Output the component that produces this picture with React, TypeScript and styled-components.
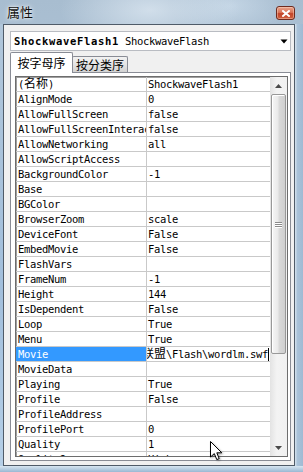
import React from "react";
import styled, { createGlobalStyle } from "styled-components";

const Global = createGlobalStyle`
  html, body { margin: 0; padding: 0; overflow: hidden; background: #b4cadd; }
  * { box-sizing: border-box; }
`;

const MONO = `"DejaVu Sans Mono", "Liberation Mono", monospace`;
const CJK = `"Noto Sans CJK SC", "Noto Sans", sans-serif`;

const Window = styled.div`
  position: relative;
  width: 303px;
  height: 472px;
  display: flex;
  flex-direction: column;
  overflow: hidden;
  background:
    radial-gradient(ellipse 90px 40px at 150px 10px, rgba(226, 236, 245, 0.7), rgba(226, 236, 245, 0) 100%),
    radial-gradient(ellipse 60px 30px at 230px 6px, rgba(210, 226, 240, 0.65), rgba(210, 226, 240, 0) 100%),
    linear-gradient(180deg, #a8bdd0 0%, #b3c9dc 40%, #a6c1da 100%);
`;

const TitleBar = styled.div`
  height: 24px;
  flex: none;
  display: flex;
  align-items: center;
  justify-content: space-between;
  padding: 0 8px 0 7px;
`;

const Title = styled.span`
  font-family: ${CJK};
  font-size: 13px;
  line-height: 16px;
  color: #111;
  text-shadow: 0 0 5px rgba(255, 255, 255, 0.95), 0 0 2px rgba(255, 255, 255, 0.9);
`;

const CloseButton = styled.div`
  width: 19px;
  height: 14px;
  margin-top: 2px;
  border: 1px solid #6e2b1f;
  border-radius: 3px;
  background: linear-gradient(180deg, #e9a48c 0%, #d97458 45%, #c2452a 55%, #d0603e 100%);
  box-shadow: inset 0 0 0 1px rgba(255, 220, 200, 0.45);
  display: flex;
  align-items: center;
  justify-content: center;
`;

const Main = styled.div`
  flex: 1;
  display: flex;
  min-height: 0;
`;

const SideFrame = styled.div<{ $w: number }>`
  width: ${(p) => p.$w}px;
  flex: none;
  background: linear-gradient(180deg, #b0c6da 0%, #a2bfdc 60%, #b5cfe7 100%);
`;

const RightFrame = styled(SideFrame)`
  background: linear-gradient(90deg, #d6e3ee 0%, #a9c2d9 30%, #9fbad3 100%);
`;

const BottomFrame = styled.div`
  height: 6px;
  flex: none;
  background: linear-gradient(180deg, #d8e6f1 0%, #b2cadf 60%, #9ab8d3 100%);
`;

const Client = styled.div`
  flex: 1;
  display: flex;
  flex-direction: column;
  min-width: 0;
  border: 1px solid #4f5b68;
  background: #f0f0f0;
  padding: 6px 3px 4px 6px;
`;

const ComboBox = styled.div`
  height: 20px;
  flex: none;
  display: flex;
  align-items: center;
  justify-content: space-between;
  border: 1px solid #b9bcc2;
  background: #ffffff;
  padding: 0 2px 0 3px;
  margin-bottom: 1px;
`;

const ComboText = styled.span`
  font-family: ${MONO};
  font-size: 10.5px;
  letter-spacing: -0.32px;
  color: #000;
  white-space: nowrap;
  line-height: 14px;
`;

const ComboBold = styled.b`
  font-weight: bold;
  letter-spacing: 0.68px;
`;

const TabStrip = styled.div`
  height: 20px;
  flex: none;
  display: flex;
  align-items: flex-end;
`;

const Tab = styled.div<{ $active?: boolean }>`
  position: relative;
  z-index: ${(p) => (p.$active ? 2 : 1)};
  width: ${(p) => (p.$active ? 63 : 56)}px;
  height: ${(p) => (p.$active ? 21 : 16)}px;
  margin-bottom: ${(p) => (p.$active ? -1 : 0)}px;
  margin-left: ${(p) => (p.$active ? 0 : -1)}px;
  border: 1px solid #898c95;
  border-bottom: none;
  border-radius: 2px 2px 0 0;
  background: ${(p) =>
    p.$active ? "#ffffff" : "linear-gradient(180deg, #f2f2f2 0%, #e4e4e4 50%, #d2d2d2 100%)"};
  display: flex;
  align-items: center;
  justify-content: center;
  padding-bottom: ${(p) => (p.$active ? 1 : 0)}px;
  font-family: ${CJK};
  font-size: 12px;
  line-height: 14px;
  color: #000;
`;

const TabPage = styled.div`
  flex: 1;
  min-height: 0;
  display: flex;
  border: 1px solid #898c95;
  background: #ffffff;
  padding: 3px 2px 3px 4px;
`;

const Grid = styled.div`
  flex: 1;
  min-width: 0;
  display: flex;
  border: 1px solid #6d6d6d;
  box-shadow: inset 1px 1px 0 #a0a0a0;
  background: #ffffff;
  overflow: hidden;
`;

const Rows = styled.div`
  flex: 1;
  min-width: 0;
  overflow: hidden;
`;

const Row = styled.div`
  height: 15px;
  display: grid;
  grid-template-columns: 131px 1fr;
  border-bottom: 1px solid #c9c9c9;
`;

const Cell = styled.div<{ $selected?: boolean }>`
  font-family: ${MONO};
  font-size: 10.5px;
  letter-spacing: -0.32px;
  line-height: 14px;
  white-space: nowrap;
  overflow: hidden;
  color: ${(p) => (p.$selected ? "#ffffff" : "#000000")};
  background: ${(p) => (p.$selected ? "#3399ff" : "transparent")};
`;

const NameCell = styled(Cell)`
  padding-left: 2px;
  border-right: 1px solid #c9c9c9;
`;

const ValueCell = styled(Cell)`
  padding-left: 1px;
`;

const EditCell = styled(Cell)`
  display: flex;
  justify-content: flex-end;
  align-items: center;
  padding-right: 1px;
`;

const Cjk = styled.span`
  font-family: ${CJK};
  font-size: 12px;
  letter-spacing: 0;
  line-height: 12px;
`;

const Caret = styled.span`
  flex: none;
  width: 1px;
  height: 13px;
  background: #000;
`;

const ScrollBar = styled.div`
  width: 17px;
  flex: none;
  display: flex;
  flex-direction: column;
  background: linear-gradient(90deg, #e3e3e3 0%, #f3f3f3 40%, #f0f0f0 100%);
`;

const ArrowButton = styled.div`
  height: 17px;
  flex: none;
  display: flex;
  align-items: center;
  justify-content: center;
`;

const Track = styled.div`
  flex: 1;
  padding: 0 1px;
  display: flex;
  flex-direction: column;
`;

const Thumb = styled.div`
  height: 260px;
  flex: none;
  border: 1px solid #989898;
  border-radius: 2px;
  background: linear-gradient(90deg, #f6f6f6 0%, #e9e9e9 45%, #d9d9d9 55%, #cfcfcf 100%);
  box-shadow: inset 1px 1px 0 #ffffff;
  display: flex;
  align-items: center;
  justify-content: center;
`;

const Grip = styled.div`
  width: 7px;
  display: flex;
  flex-direction: column;
  gap: 1px;
`;

const GripLine = styled.div`
  height: 1px;
  background: #8a8a8a;
  box-shadow: 0 1px 0 #ffffff;
`;

const Pointer = styled.svg`
  position: absolute;
  left: 210px;
  top: 441px;
  filter: drop-shadow(1px 1px 1px rgba(0, 0, 0, 0.35));
`;

type Prop = { name: React.ReactNode; value?: React.ReactNode; selected?: boolean };

const props: Prop[] = [
  { name: <>(<Cjk>名称</Cjk>)</>, value: "ShockwaveFlash1" },
  { name: "AlignMode", value: "0" },
  { name: "AllowFullScreen", value: "false" },
  { name: "AllowFullScreenInteractive", value: "false" },
  { name: "AllowNetworking", value: "all" },
  { name: "AllowScriptAccess", value: "" },
  { name: "BackgroundColor", value: "-1" },
  { name: "Base", value: "" },
  { name: "BGColor", value: "" },
  { name: "BrowserZoom", value: "scale" },
  { name: "DeviceFont", value: "False" },
  { name: "EmbedMovie", value: "False" },
  { name: "FlashVars", value: "" },
  { name: "FrameNum", value: "-1" },
  { name: "Height", value: "144" },
  { name: "IsDependent", value: "False" },
  { name: "Loop", value: "True" },
  { name: "Menu", value: "True" },
  { name: "Movie", selected: true },
  { name: "MovieData", value: "" },
  { name: "Playing", value: "True" },
  { name: "Profile", value: "False" },
  { name: "ProfileAddress", value: "" },
  { name: "ProfilePort", value: "0" },
  { name: "Quality", value: "1" },
  { name: "Quality2", value: "High" },
];

export default function App() {
  return (
    <>
      <Global />
      <Window>
        <TitleBar>
          <Title>属性</Title>
          <CloseButton>
            <svg width="8" height="7" viewBox="0 0 8 7">
              <path d="M1 1 L7 6 M7 1 L1 6" stroke="#ffffff" strokeWidth="2" strokeLinecap="square" />
            </svg>
          </CloseButton>
        </TitleBar>
        <Main>
          <SideFrame $w={3} />
          <Client>
            <ComboBox>
              <ComboText>
                <ComboBold>ShockwaveFlash1</ComboBold> ShockwaveFlash
              </ComboText>
              <svg width="8" height="5" viewBox="0 0 8 5">
                <path d="M0.5 0.5 H7.5 L4 4.5 Z" fill="#000" />
              </svg>
            </ComboBox>
            <TabStrip>
              <Tab $active>按字母序</Tab>
              <Tab>按分类序</Tab>
            </TabStrip>
            <TabPage>
              <Grid>
                <Rows>
                  {props.map((p, i) => (
                    <Row key={i}>
                      <NameCell $selected={p.selected}>{p.name}</NameCell>
                      {p.selected ? (
                        <EditCell>
                          <span>
                            <Cjk>联盟</Cjk>\Flash\wordlm.swf
                          </span>
                          <Caret />
                        </EditCell>
                      ) : (
                        <ValueCell>{p.value}</ValueCell>
                      )}
                    </Row>
                  ))}
                </Rows>
                <ScrollBar>
                  <ArrowButton>
                    <svg width="7" height="4" viewBox="0 0 7 4">
                      <path d="M0 4 H7 L3.5 0 Z" fill="#4a4a4a" />
                    </svg>
                  </ArrowButton>
                  <Track>
                    <Thumb>
                      <Grip>
                        <GripLine />
                        <GripLine />
                        <GripLine />
                      </Grip>
                    </Thumb>
                  </Track>
                  <ArrowButton>
                    <svg width="7" height="4" viewBox="0 0 7 4">
                      <path d="M0 0 H7 L3.5 4 Z" fill="#4a4a4a" />
                    </svg>
                  </ArrowButton>
                </ScrollBar>
              </Grid>
            </TabPage>
          </Client>
          <RightFrame $w={8} />
        </Main>
        <BottomFrame />
        <Pointer width="13" height="20" viewBox="0 0 13 20">
          <path
            d="M0.5 0.5 L0.5 16 L4.3 12.6 L6.8 18.6 L9.2 17.6 L6.8 11.8 L11.8 11.8 Z"
            fill="#ffffff"
            stroke="#000000"
            strokeWidth="1"
            strokeLinejoin="miter"
          />
        </Pointer>
      </Window>
    </>
  );
}
